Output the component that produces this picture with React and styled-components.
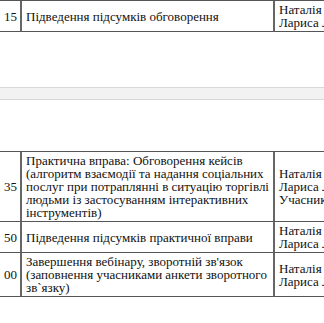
import React from 'react';
import styled, { createGlobalStyle } from 'styled-components';

const GlobalStyle = createGlobalStyle`
  html, body {
    margin: 0;
    padding: 0;
    background: #fff;
    overflow: hidden;
  }
  body {
    font-family: "Liberation Serif", "Times New Roman", "DejaVu Serif", serif;
    color: #111;
  }
`;

const topRows = [
  { time: '15', title: 'Підведення підсумків обговорення', people: ['Наталія Петрова', 'Лариса Левченко'] },
];

const bottomRows = [
  {
    time: '35',
    title:
      'Практична вправа: Обговорення кейсів (алгоритм взаємодії та надання соціальних послуг при потраплянні в ситуацію торгівлі людьми із застосуванням інтерактивних інструментів)',
    people: ['Наталія Петрова', 'Лариса Левченко', 'Учасники'],
  },
  { time: '50', title: 'Підведення підсумків практичної вправи', people: ['Наталія Петрова', 'Лариса Левченко'] },
  {
    time: '00',
    title: "Завершення вебінару, зворотній зв'язок (заповнення учасниками анкети зворотного зв`язку)",
    people: ['Наталія Петрова', 'Лариса Левченко'],
  },
];

const Page = styled.div`
  width: 324px;
  height: 323px;
  display: flex;
  flex-direction: column;
`;

const Table = styled.div`
  display: grid;
  grid-template-columns: 20px 253px 1fr;
  border-top: 1px solid #555;
  margin-top: ${(p) => p.$top || 0}px;
`;

const Cell = styled.div`
  display: flex;
  align-items: center;
  font-size: 13px;
  line-height: 13px;
  padding: 2px 4px 2px;
  border-bottom: 1px solid #555;
  border-left: ${(p) => (p.$first ? 'none' : '2px solid #666')};
  overflow: hidden;
  white-space: ${(p) => (p.$nowrap ? 'nowrap' : 'normal')};
  justify-content: ${(p) => (p.$right ? 'flex-end' : 'flex-start')};
`;

const People = styled.div`
  display: flex;
  flex-direction: column;
`;

const PageGap = styled.div`
  margin-top: 55px;
  height: 11px;
  background: #f2f2f2;
  border-top: 1px solid #d8d8d8;
  border-bottom: 1px solid #d8d8d8;
`;

const Row = ({ row }) => (
  <>
    <Cell $first $right $nowrap style={{ paddingLeft: 0, paddingRight: 3 }}>
      {row.time}
    </Cell>
    <Cell>{row.title}</Cell>
    <Cell $nowrap>
      <People>
        {row.people.map((p) => (
          <span key={p}>{p}</span>
        ))}
      </People>
    </Cell>
  </>
);

const App = () => (
  <Page>
    <GlobalStyle />
    <Table>
      {topRows.map((r) => (
        <Row key={r.time} row={r} />
      ))}
    </Table>
    <PageGap />
    <Table $top={51}>
      {bottomRows.map((r) => (
        <Row key={r.time} row={r} />
      ))}
    </Table>
  </Page>
);

export default App;
